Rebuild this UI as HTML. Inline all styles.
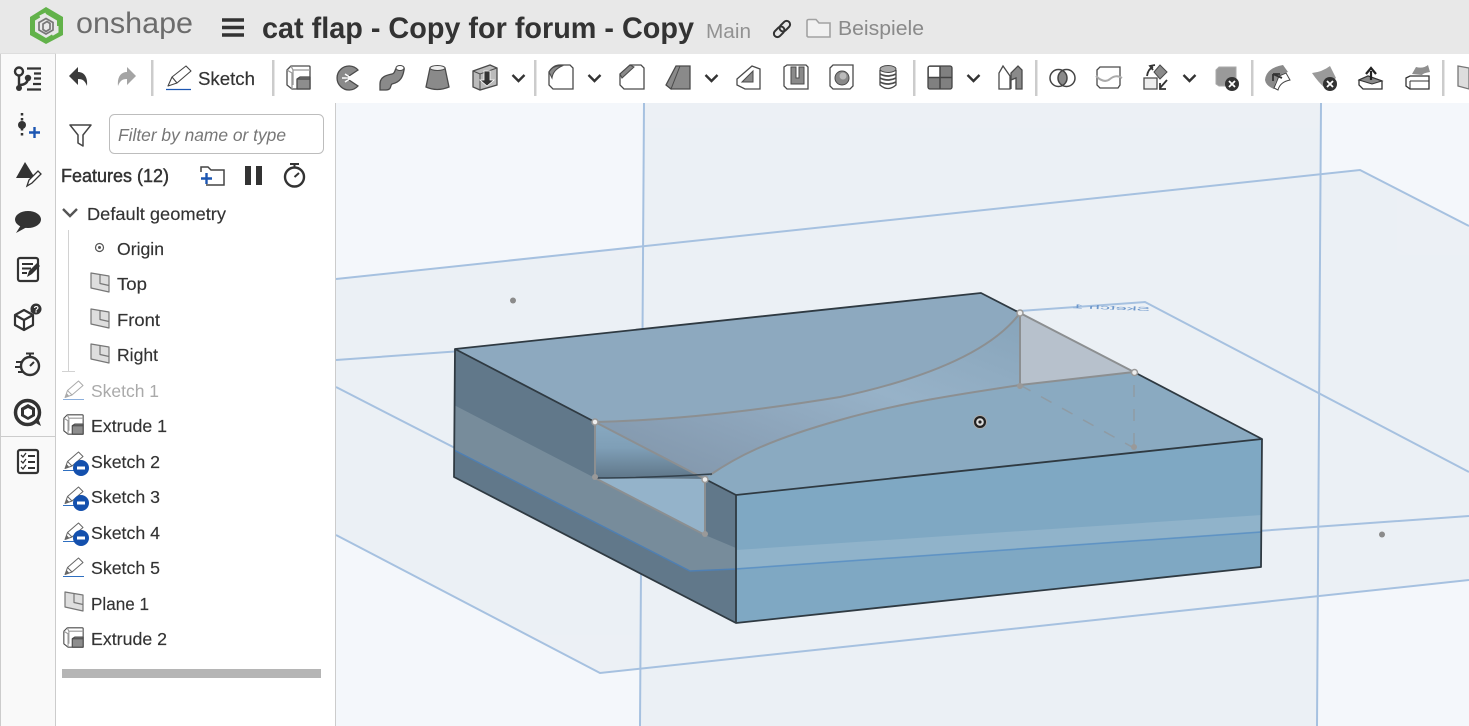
<!DOCTYPE html>
<html><head><meta charset="utf-8"><style>
html,body{margin:0;padding:0;background:#fff}
body{width:1469px;height:726px;overflow:hidden;position:relative}
svg{position:absolute;left:0;top:0;display:block}
text{font-family:"Liberation Sans",sans-serif;fill:#333}
</style></head><body>
<svg width="1469" height="726" viewBox="0 0 1469 726" xmlns="http://www.w3.org/2000/svg">
<defs>
<linearGradient id="wall" x1="0" y1="0" x2="0" y2="1"><stop offset="0" stop-color="#88a9c1"/><stop offset=".45" stop-color="#7f9fb7"/><stop offset="1" stop-color="#5f7688"/></linearGradient>
<linearGradient id="sweep" x1="0" y1="1" x2="1" y2="0"><stop offset="0" stop-color="#7f93a7"/><stop offset=".3" stop-color="#8ba2b8"/><stop offset=".6" stop-color="#97b2c8"/><stop offset="1" stop-color="#87a4ba"/></linearGradient>
<g id="pen" fill="#fff" stroke="#666" stroke-width="1" stroke-linejoin="round"><path d="M2 17.500L4.500 10.500L15.500 1L20 5.500L9 15Z"/><path d="M4.500 10.500L9 15" fill="none"/><path d="M2.500 17L5.500 15.800L3.800 14Z" fill="#666"/><path d="M0 19.500H21" stroke="#2f6fc0"/></g>
<g id="ext" stroke="#4a4a4a" stroke-width="1.300" stroke-linejoin="round"><path d="M1 5L5 1H23Q24 1 24 2V24H6L1 20Z" fill="#fff"/><path d="M5 1L7 5H24M1 5L6 8V24M7 5V20" fill="none" stroke="#999"/><path d="M11 14L14 12H24V24H11Z" fill="#8d8d8d"/><path d="M11 14H24" fill="none"/></g>
<g id="plane" fill="#dedede" stroke="#777" stroke-width="1.200" stroke-linejoin="round"><path d="M1 0L19 3V19L1 15Z"/><path d="M10 1.500V10.500L19 12.500" fill="none"/></g>
<g id="minus"><circle cx="0" cy="0" r="8" fill="#1450ad"/><rect x="-4" y="-1.500" width="8" height="3" fill="#fff"/></g>
<path id="chev" d="M-6 -3L0 3L6 -3" fill="none" stroke="#333" stroke-width="2.400"/>
</defs>

<!-- viewport -->
<rect x="336" y="103" width="1133" height="623" fill="#f4f7fb"/>
<g fill="#a8b8c8" opacity=".1">
<polygon points="644,103 1321,103 1317,726 640,726"/>
<polygon points="336,279 1360,170 1469,226 1469,580 600,673 336,535"/>
<polygon points="336,360 1145,302 1469,472 1469,516 695,571 336,387"/>
</g>
<g fill="none" stroke="#a6c1e0" stroke-width="2">
<path d="M336 279L1360 170L1469 226"/>
<path d="M336 535L600 673L1469 580"/>
<path d="M644 103L640 726M1321 103L1317 726"/>
<path d="M336 360L1145 302L1469 472"/>
<path d="M336 387L695 571L1469 516"/>
</g>
<text transform="translate(1150,311) scale(-1,.7) rotate(-3)" font-size="8" style="fill:#6d97cb" textLength="78" lengthAdjust="spacingAndGlyphs">Sketch 1</text>
<circle cx="513" cy="300.500" r="3" fill="#8b8b8b"/><circle cx="1382" cy="534.500" r="3" fill="#8b8b8b"/>

<!-- body -->
<polygon points="455,349 595,422 595,478 705,535 705,479 736,495 736,623 454,477" fill="#61788a"/>
<polygon points="454,405 595,478 705,535 736,548 736,569 690,571 454,450" fill="#778c9b"/>
<path d="M454 450L690 571L736 569" fill="none" stroke="#4f7fb2" stroke-width="1.500"/>
<polygon points="736,495 1262,439 1261,567 736,623" fill="#7fa8c3"/>
<polygon points="736,550 1262,515 1262,531 736,568" fill="#90b3ca"/>
<path d="M736 569L1262 532" stroke="#5f93c4" stroke-width="1.500" fill="none"/>
<polygon points="595,478 705,535 705,479" fill="#94b3ca"/>
<polygon points="595,422 705,479 595,478" fill="url(#wall)"/>
<polygon points="455,349 981,293 1020,313 1134,372 1262,439 736,495 704,479 595,422" fill="#8aaac1"/>
<path d="M455 349L981 293L1020 313C985 360 900 384 840 397C760 410 680 420 595 422Z" fill="#8da9bf"/>
<path d="M595 422C680 420 760 410 840 397C900 384 985 360 1020 313V385C960 394 900 403 840 420C765 441 735 458 710 475L704 479Z" fill="url(#sweep)"/>
<polygon points="1020,313 1134,372 1020,385" fill="#b7c1cc"/>
<g fill="none" stroke="#8c8f91" stroke-width="2">
<path d="M595 422C680 420 760 410 840 397C900 384 985 360 1020 313"/>
<path d="M710 475C735 458 765 441 840 420C900 403 960 394 1020 385L1134 372"/>
<path d="M595 422V478L705 535V479L595 422M1020 313V385M1020 313L1134 372"/>
</g>
<path d="M597 478C640 478 680 476 712 474" stroke="#33414c" stroke-width="1.500" fill="none"/>
<path d="M1020 385L1134 448M1134 385V448" stroke="#8f9ba4" stroke-width="1.500" fill="none" stroke-dasharray="12 12"/>
<g fill="none" stroke="#2f3a42" stroke-width="1.800" stroke-linejoin="round">
<path d="M595 422L455 349L981 293L1020 313M1134 372L1262 439L736 495L705 479"/>
<path d="M455 349L454 477L736 623L1261 567L1262 439M736 495V623"/>
</g>
<g fill="#eee" stroke="#999" stroke-width="1.500"><circle cx="595" cy="422" r="3"/><circle cx="705" cy="479.500" r="3"/><circle cx="1020" cy="313" r="3"/><circle cx="1134.500" cy="372.500" r="3"/></g>
<g fill="#999"><circle cx="595" cy="477" r="3"/><circle cx="705" cy="534" r="3"/><circle cx="1020" cy="386" r="3"/><circle cx="1134" cy="447" r="3"/></g>
<circle cx="980" cy="422" r="6.500" fill="#222" stroke="#aaa" stroke-width="1"/><circle cx="980" cy="422" r="3.800" fill="#ddd"/><circle cx="980" cy="422" r="1.600" fill="#222"/>

<!-- header -->
<rect x="0" y="0" width="1469" height="54" fill="#e8e8e8"/>
<rect x="0" y="53" width="56" height="1" fill="#ddd"/>
<polygon points="46,7 63,17 63,35 46,44 30,35 30,17" fill="#62b24a"/>
<path d="M46 14L57 20.500V31.500L46 38L35 31.500V20.500Z" fill="#e8e8e8"/>
<path d="M40 17L46 14M57 26V31.500L52 34.500" fill="none" stroke="#e8e8e8" stroke-width="3"/>
<path d="M46 18.500L53 22.500V30L46 34L39 30V22.500ZM43 24L47 21.500L50 23.500V29L46 31.500L43 29.500Z" fill="none" stroke="#777" stroke-width="1.700"/>
<text x="76" y="33" font-size="30" textLength="117" lengthAdjust="spacingAndGlyphs" style="fill:#6c6c6c">onshape</text>
<path d="M222 20H244M222 27.500H244M222 35H244" stroke="#333" stroke-width="3.400"/>
<text x="262" y="38" font-size="29.500" font-weight="700" textLength="432" lengthAdjust="spacingAndGlyphs" style="fill:#333">cat flap - Copy for forum - Copy</text>
<text x="706" y="38" font-size="20.500" textLength="45" lengthAdjust="spacingAndGlyphs" style="fill:#929292">Main</text>
<g fill="none" stroke="#333" stroke-width="2" transform="rotate(-45 782 29)"><rect x="772" y="25.500" width="12" height="7" rx="3.500"/><rect x="780" y="25.500" width="12" height="7" rx="3.500"/></g>
<path d="M807 36V21Q807 19.500 809 19.500H816L819 23H830V37H808Z" fill="#f1f1f1" stroke="#a2a2a2" stroke-width="1.600"/>
<text x="838" y="35" font-size="20.500" textLength="86" lengthAdjust="spacingAndGlyphs" style="fill:#8a8a8a">Beispiele</text>

<!-- left rail -->
<rect x="0" y="54" width="56" height="672" fill="#f9f9f9"/>
<rect x="0" y="54" width="1" height="672" fill="#ccc"/>
<rect x="55" y="54" width="1" height="672" fill="#ccc"/>
<rect x="0" y="436" width="55" height="1" fill="#ccc"/>
<g fill="none" stroke="#333" stroke-width="2.400"><circle cx="19" cy="71.500" r="4"/><path d="M19 76V87M19 85Q27 85 28 79"/></g>
<circle cx="19" cy="88" r="3" fill="#333"/><circle cx="28" cy="78" r="3.200" fill="#333"/>
<path d="M27 68.500H41M34 73.500H41M34 78.500H41M33 84H41M27 89.500H41" stroke="#333" stroke-width="2.300" fill="none"/>
<path d="M22 113V137" stroke="#333" stroke-width="2.500" stroke-dasharray="2.500 2.500"/><circle cx="22" cy="125" r="4" fill="#333"/>
<path d="M29 132.500H40M34.500 127V138" stroke="#1c56b2" stroke-width="2.400"/>
<polygon points="25,162 35,178 16,178" fill="#333"/>
<path d="M27 186L29 180L38 171L41 174L32 183Z" fill="#fff" stroke="#333" stroke-width="1.300"/>
<ellipse cx="28" cy="219.500" rx="13" ry="8.500" fill="#333"/><path d="M21 225L16 233L27 227Z" fill="#333"/>
<rect x="18" y="258" width="20" height="23" rx="2" fill="#fff" stroke="#333" stroke-width="2.200"/>
<path d="M22 264H33M22 268.500H31M22 273H27" stroke="#333" stroke-width="2"/>
<path d="M27 277L29 271L37 263L40 266L32 274Z" fill="#333"/>
<g fill="#fff" stroke="#333" stroke-width="2.200" stroke-linejoin="round"><path d="M15 315L24 310L33 315V325L24 330L15 325Z"/><path d="M15 315L24 320L33 315M24 320V330" fill="none"/></g>
<path d="M31 312L35 309" stroke="#333" stroke-width="2"/>
<circle cx="36" cy="309" r="5.500" fill="#333"/><text x="33.500" y="312.500" font-size="9" font-weight="700" style="fill:#fff">?</text>
<circle cx="30" cy="366" r="9" fill="none" stroke="#333" stroke-width="2.400"/>
<path d="M26 353.500H34M30 354V357M30 366L34 362M16 362H22M15 367H20M18 372H23" stroke="#333" stroke-width="2"/>
<circle cx="27.500" cy="412.500" r="12" fill="#fff" stroke="#333" stroke-width="3.500"/><path d="M34 422L41 426L38 418Z" fill="#333"/>
<path d="M28 404L35 408V416L28 420L21 416V408Z" fill="#333"/><path d="M28 408L32 410V414.500L28 417L24 414.500V410Z" fill="#fff"/>
<rect x="18" y="450" width="20" height="23" rx="2" fill="#fff" stroke="#333" stroke-width="2.200"/>
<path d="M21 455L23 457L26 453M21 461L23 463L26 459M21 467L23 469L26 465" fill="none" stroke="#333" stroke-width="1.300"/>
<path d="M28 456H35M28 462H35M28 468H35" stroke="#333" stroke-width="2"/>

<!-- toolbar -->
<rect x="56" y="54" width="1413" height="49" fill="#fff"/>
<g fill="#ccc"><rect x="151" y="60" width="2.500" height="36"/><rect x="272" y="60" width="2.500" height="36"/><rect x="534" y="60" width="2.500" height="36"/><rect x="913" y="60" width="2.500" height="36"/><rect x="1035" y="60" width="2.500" height="36"/><rect x="1251" y="60" width="2.500" height="36"/><rect x="1442" y="60" width="2.500" height="36"/></g>
<path d="M69 76L78 67V72C84 72 88 77 87 86C85 81 83 79 78 79V85Z" fill="#3b3b3b"/>
<path d="M136 76L127 67V72C121 72 117 77 118 86C120 81 122 79 127 79V85Z" fill="#a4a4a4"/>
<g fill="#fff" stroke="#444" stroke-width="1.100" stroke-linejoin="round"><path d="M168 86L172 77L186 66L191 71L177 83Z"/><path d="M172 77L177 83" fill="none"/></g><path d="M166 89.500H191" stroke="#1c56b2" stroke-width="1.200"/>
<text x="198" y="85" font-size="18.500" textLength="57" lengthAdjust="spacingAndGlyphs" stroke="#333" stroke-width=".2">Sketch</text>
<use href="#ext" transform="translate(286,65)"/>
<path d="M358 70A12 12 0 1 0 358 86L346 78Z" fill="#8a8a8a" stroke="#4a4a4a" stroke-width="1.300"/><path d="M342 78H358M345 74L351 78L345 82" fill="none" stroke="#fff" stroke-width="1.500"/>
<path d="M380 90V84C380 76 388 75 392 74C396 73 394 69 398 66C402 65 405 67 404 70C403 76 401 82 392 84C390 85 392 90 386 90Z" fill="#8a8a8a" stroke="#4a4a4a" stroke-width="1.300"/><ellipse cx="400" cy="68" rx="4" ry="2.500" fill="#fff" stroke="#4a4a4a"/>
<path d="M430 68L426 87Q437 92 449 87L445 68Z" fill="#8a8a8a" stroke="#4a4a4a" stroke-width="1.300"/><ellipse cx="437.500" cy="68" rx="7.500" ry="2.500" fill="#eee" stroke="#4a4a4a"/>
<path d="M473 71L490 65L497 68V85L480 90L473 87Z" fill="#bbb" stroke="#4a4a4a" stroke-width="1.300"/><path d="M473 71L480 74L497 68M480 74V90" fill="none" stroke="#4a4a4a"/><path d="M484 71V80H480L487 86L494 80H490V71Z" fill="#333" stroke="#fff" stroke-width=".8"/>
<use href="#chev" transform="translate(518.500,78)"/>
<path d="M549 72Q553 65 560 65H570L573 68V89H553L549 85Z" fill="#fff" stroke="#4a4a4a" stroke-width="1.300"/><path d="M549 72Q553 65 562 66Q553 70 552 78Z" fill="#8a8a8a" stroke="#4a4a4a"/>
<use href="#chev" transform="translate(594.500,78)"/>
<path d="M620 74L630 65H641L644 68V89H624L620 85Z" fill="#fff" stroke="#4a4a4a" stroke-width="1.300"/><path d="M620 74L630 65L634 67L622 78Z" fill="#8a8a8a" stroke="#4a4a4a"/>
<path d="M666 85L676 66H690V89H671Z" fill="#8a8a8a" stroke="#4a4a4a" stroke-width="1.300"/><path d="M666 85L671 89L680 66" fill="none" stroke="#4a4a4a"/>
<use href="#chev" transform="translate(711.500,78)"/>
<path d="M737 79L752 66L760 69V89H745L737 85Z" fill="#fff" stroke="#4a4a4a" stroke-width="1.300"/><path d="M742 82L753 71V82Z" fill="#8a8a8a" stroke="#4a4a4a"/>
<path d="M784 67L787 65H806L808 67V89H787L784 86Z" fill="#fff" stroke="#4a4a4a" stroke-width="1.300"/><path d="M791 67V84H804V67H799V78H796V67Z" fill="#8a8a8a" stroke="#4a4a4a"/>
<path d="M830 68L833 65H853V86L850 89H833L830 86Z" fill="#fff" stroke="#4a4a4a" stroke-width="1.300"/><circle cx="842" cy="78" r="7" fill="#8a8a8a" stroke="#4a4a4a"/><circle cx="843" cy="76" r="3.500" fill="#bbb"/>
<path d="M880 70V85Q888 92 896 85V70" fill="#fff" stroke="#4a4a4a" stroke-width="1.300"/><ellipse cx="888" cy="69" rx="8" ry="3.500" fill="#aaa" stroke="#4a4a4a"/><path d="M880 74Q888 78 896 74M880 78Q888 82 896 78M880 82Q888 86 896 82" fill="none" stroke="#4a4a4a" stroke-width="1.800"/>
<rect x="928" y="66" width="24" height="23" rx="2" fill="#808080" stroke="#444" stroke-width="1.300"/><rect x="929" y="67" width="11" height="10" fill="#fff"/><path d="M940 66V89M928 77.500H952" stroke="#444" stroke-width="1.500"/>
<use href="#chev" transform="translate(973.500,78)"/>
<path d="M999 89V73L1003 66L1010 76V89Z" fill="#fff" stroke="#4a4a4a" stroke-width="1.300"/><path d="M1011 89V73L1018 66L1022 70V89H1016V78L1011 80Z" fill="#8a8a8a" stroke="#4a4a4a" stroke-width="1.300"/>
<path d="M1062.500 70.700A8.500 8.500 0 0 1 1062.500 85.300A8.500 8.500 0 0 1 1062.500 70.700Z" fill="#8a8a8a"/>
<circle cx="1058.500" cy="78" r="8.500" fill="none" stroke="#444" stroke-width="1.500"/><circle cx="1066.500" cy="78" r="8.500" fill="none" stroke="#444" stroke-width="1.500"/>
<path d="M1097 70L1100 67H1120V85L1118 88H1100L1097 85Z" fill="#fff" stroke="#4a4a4a" stroke-width="1.300"/><path d="M1096 76Q1104 84 1110 79T1122 78" fill="none" stroke="#aaa" stroke-width="2"/>
<path d="M1144 78H1157V89H1144Z" fill="#eee" stroke="#4a4a4a" stroke-width="1.300"/><path d="M1160 65L1167 72L1160 79L1154 72Z" fill="#8a8a8a" stroke="#4a4a4a"/>
<path d="M1147 76Q1148 69 1153 67M1155 65L1150 66L1153 70M1167 80L1160 88M1160 83V89H1166" fill="none" stroke="#333" stroke-width="1.800"/>
<use href="#chev" transform="translate(1189.500,78)"/>
<path d="M1216 70L1219 67H1236V86H1219L1216 84Z" fill="#9a9a9a" stroke="#aaa"/><circle cx="1232" cy="84" r="7" fill="#333"/><path d="M1229 81L1235 87M1235 81L1229 87" stroke="#fff" stroke-width="1.800"/>
<path d="M1265 80Q1266 68 1283 65L1288 72Q1276 74 1274 89Q1266 86 1265 80Z" fill="#8a8a8a"/><path d="M1279 76L1274 88L1278 90Q1280 82 1290 80L1286 73Z" fill="#fff" stroke="#444"/><path d="M1273 74L1282 78M1273 74V81M1273 74H1280" stroke="#333" stroke-width="1.800" fill="none"/>
<path d="M1312 73Q1322 72 1330 66L1336 78L1325 88Q1318 82 1312 73Z" fill="#9a9a9a"/><circle cx="1330" cy="84" r="7" fill="#333"/><path d="M1327 81L1333 87M1333 81L1327 87" stroke="#fff" stroke-width="1.800"/>
<path d="M1359 80L1368 76L1382 81V89H1363L1359 85Z" fill="#fff" stroke="#333" stroke-width="1.300"/><path d="M1359 80L1368 76L1382 81L1372 84Z" fill="#8a8a8a" stroke="#333"/><path d="M1371 80V71M1366 74L1371 68L1376 74" stroke="#222" stroke-width="2.200" fill="none"/>
<path d="M1406 78L1410 76H1429V89H1410L1406 86Z" fill="#fff" stroke="#333" stroke-width="1.300"/><path d="M1410 81H1429M1410 81V89" fill="none" stroke="#333"/><path d="M1416 67Q1423 69 1428 65L1430 72Q1423 73 1422 75L1412 74Z" fill="#8f8f8f"/>
<path d="M1458 66L1469 68V89L1458 86Z" fill="#ddd" stroke="#777" stroke-width="1.300"/>

<!-- feature panel -->
<rect x="56" y="103" width="280" height="623" fill="#fff"/>
<rect x="335" y="103" width="1" height="623" fill="#ccc"/>
<path d="M70 125H91L83 135V146L78 143V135Z" fill="#fff" stroke="#444" stroke-width="1.500" stroke-linejoin="round"/>
<rect x="109.500" y="114.500" width="214" height="39" rx="5" fill="#fff" stroke="#bdbdbd"/>
<text x="118" y="141" font-size="17.500" font-style="italic" textLength="168" lengthAdjust="spacingAndGlyphs" style="fill:#777">Filter by name or type</text>
<text x="61" y="182" font-size="18.500" textLength="108" lengthAdjust="spacingAndGlyphs" stroke="#333" stroke-width=".45">Features (12)</text>
<path d="M201 172V167H208L211 170H224V185H206" fill="none" stroke="#444" stroke-width="1.500"/>
<path d="M201 178.500H212M206.500 173V184" stroke="#1c56b2" stroke-width="2.400"/>
<rect x="245" y="166" width="6" height="19" fill="#333"/><rect x="256" y="166" width="6" height="19" fill="#333"/>
<circle cx="294.500" cy="177" r="9.500" fill="none" stroke="#333" stroke-width="2.400"/>
<path d="M290 164H299M294.500 164V168M294.500 177L299 173" stroke="#333" stroke-width="2"/>

<path d="M63 209L70 216L77 209" fill="none" stroke="#555" stroke-width="2.400"/>
<path d="M68.500 230V372M62 371.500H75" stroke="#d2d2d2" stroke-width="1"/>
<circle cx="99.500" cy="247.500" r="4" fill="none" stroke="#555" stroke-width="1.200"/><circle cx="99.500" cy="247.500" r="1.500" fill="#555"/>
<use href="#plane" transform="translate(90,273)"/>
<use href="#plane" transform="translate(90,309)"/>
<use href="#plane" transform="translate(90,344)"/>
<use href="#pen" transform="translate(63,380)" opacity=".55"/>
<use href="#ext" transform="translate(63,414) scale(.84)"/>
<use href="#pen" transform="translate(63,451)"/><use href="#minus" transform="translate(81,468)"/>
<use href="#pen" transform="translate(63,486)"/><use href="#minus" transform="translate(81,503)"/>
<use href="#pen" transform="translate(63,522)"/><use href="#minus" transform="translate(81,538)"/>
<use href="#pen" transform="translate(63,557)"/>
<use href="#plane" transform="translate(64,592)"/>
<use href="#ext" transform="translate(63,627) scale(.84)"/>
<g font-size="17.500" stroke="#333" stroke-width=".15">
<text x="87" y="220" textLength="139" lengthAdjust="spacingAndGlyphs">Default geometry</text>
<text x="117" y="255" textLength="47" lengthAdjust="spacingAndGlyphs">Origin</text>
<text x="117" y="290" textLength="30" lengthAdjust="spacingAndGlyphs">Top</text>
<text x="117" y="326" textLength="43" lengthAdjust="spacingAndGlyphs">Front</text>
<text x="117" y="361" textLength="41" lengthAdjust="spacingAndGlyphs">Right</text>
<text x="91" y="397" textLength="68" lengthAdjust="spacingAndGlyphs" style="fill:#aaa;stroke:none">Sketch 1</text>
<text x="91" y="432" textLength="76" lengthAdjust="spacingAndGlyphs">Extrude 1</text>
<text x="91" y="468" textLength="69" lengthAdjust="spacingAndGlyphs">Sketch 2</text>
<text x="91" y="503" textLength="69" lengthAdjust="spacingAndGlyphs">Sketch 3</text>
<text x="91" y="539" textLength="69" lengthAdjust="spacingAndGlyphs">Sketch 4</text>
<text x="91" y="574" textLength="69" lengthAdjust="spacingAndGlyphs">Sketch 5</text>
<text x="91" y="610" textLength="58" lengthAdjust="spacingAndGlyphs">Plane 1</text>
<text x="91" y="645" textLength="76" lengthAdjust="spacingAndGlyphs">Extrude 2</text>
</g>
<rect x="62" y="669" width="259" height="9" fill="#b5b5b5"/>
</svg>
</body></html>
